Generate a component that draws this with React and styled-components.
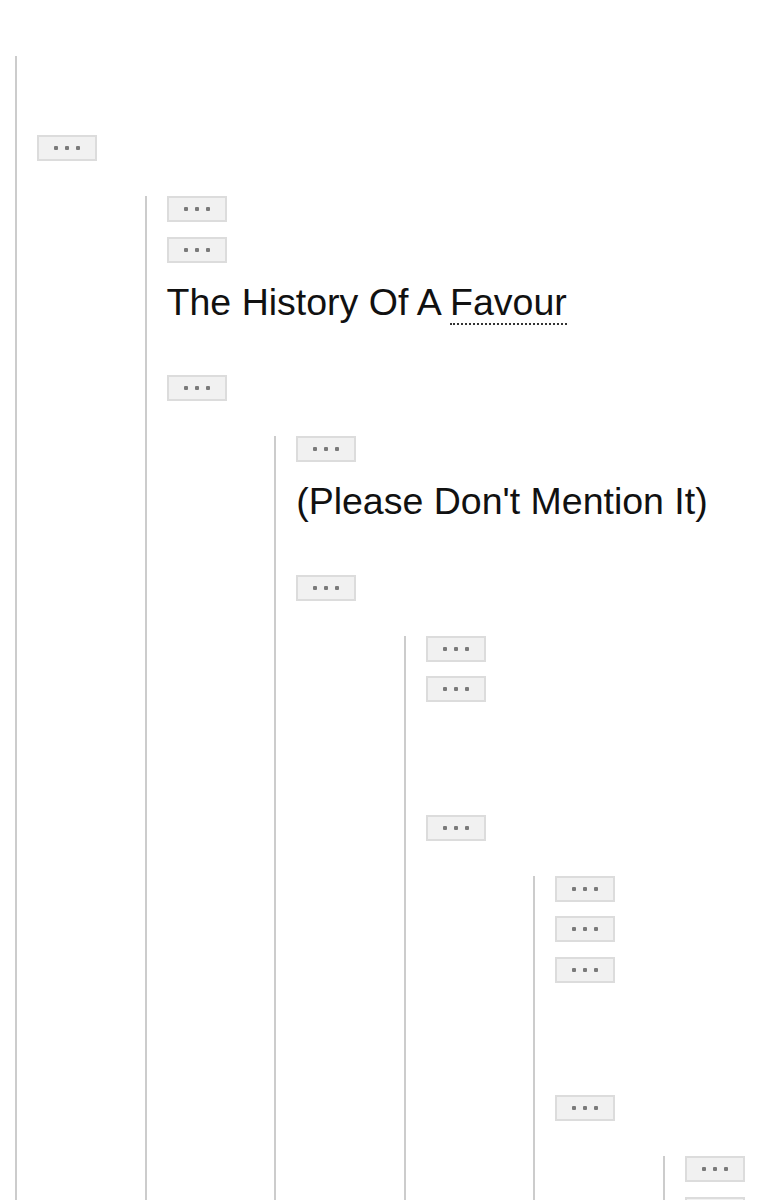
import React from "react";
import styled, { createGlobalStyle } from "styled-components";

const Global = createGlobalStyle`
  html, body {
    margin: 0;
    padding: 0;
    height: 1200px;
    overflow: hidden;
    background: #ffffff;
  }
  body {
    font-family: "Liberation Sans", Arial, sans-serif;
    color: #111;
  }
`;

const Page = styled.div`
  height: 1200px;
  overflow: hidden;
  box-sizing: border-box;
  padding: 56px 0 0 15px;
  background: #fff;
`;

const Quote = styled.div`
  display: flex;
  flex-direction: column;
  align-items: flex-start;
  margin: ${(p) => (p.$nested ? "20.5px 0 0 107.6px" : "0")};
  padding: ${(p) => p.$top || 0}px 0 0 20px;
  border-left: 2px solid #cccccc;
  min-height: ${(p) => (p.$nested ? "0" : "1200px")};
`;

const MoreButton = styled.div`
  box-sizing: border-box;
  width: 60px;
  height: 26px;
  margin-bottom: 14.5px;
  background: #f1f1f1;
  border: 2px solid #dcdcdc;
  display: flex;
  align-items: center;
  justify-content: center;
  gap: 7px;
  flex-shrink: 0;
`;

const Dot = styled.span`
  width: 4px;
  height: 4px;
  border-radius: 1px;
  background: #7a7a7a;
`;

const Line = styled.div`
  margin: 3.5px 0 52.5px 0;
  height: 42px;
  line-height: 42px;
  font-size: 37.5px;
  white-space: nowrap;
  color: #111;
`;

const Dotted = styled.span`
  border-bottom: 2px dotted #333;
`;

const Ellipsis = () => (
  <MoreButton>
    <Dot />
    <Dot />
    <Dot />
  </MoreButton>
);

const levels = [
  { top: 79, items: ["b"] },
  {
    items: [
      "b",
      "b",
      {
        text: (
          <>
            The History Of A <Dotted>Favour</Dotted>
          </>
        ),
      },
      "b",
    ],
  },
  { items: ["b", { text: "(Please Don't Mention It)" }, "b"] },
  { items: ["b", "b", { text: null }, "b"] },
  { items: ["b", "b", "b", { text: null }, "b"] },
  { items: ["b", "b", "b", "b", { text: null }, "b"] },
];

const Level = ({ index }) => {
  const lvl = levels[index];
  return (
    <Quote $nested={index > 0} $top={lvl.top}>
      {lvl.items.map((it, i) =>
        it === "b" ? (
          <Ellipsis key={i} />
        ) : (
          <Line key={i}>{it.text}</Line>
        )
      )}
      {index + 1 < levels.length && <Level index={index + 1} />}
    </Quote>
  );
};

export default function App() {
  return (
    <>
      <Global />
      <Page>
        <Level index={0} />
      </Page>
    </>
  );
}
